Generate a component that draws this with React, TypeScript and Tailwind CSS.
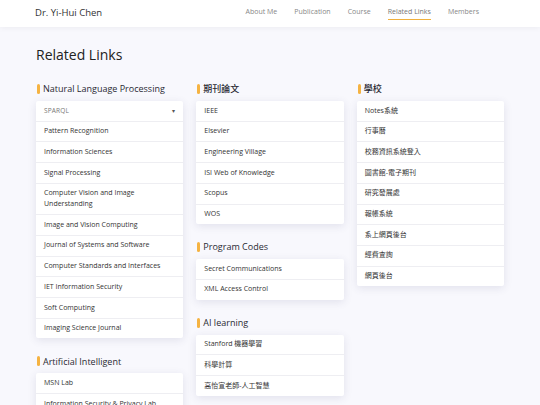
const nav = ['About Me', 'Publication', 'Course', 'Related Links', 'Members'];

type Section = { title: string; items: string[]; select?: string };

const col1: Section[] = [
  {
    title: 'Natural Language Processing',
    select: 'SPARQL',
    items: [
      'Pattern Recognition',
      'Information Sciences',
      'Signal Processing',
      'Computer Vision and Image Understanding',
      'Image and Vision Computing',
      'Journal of Systems and Software',
      'Computer Standards and Interfaces',
      'IET Information Security',
      'Soft Computing',
      'Imaging Science Journal',
    ],
  },
  { title: 'Artificial Intelligent', items: ['MSN Lab', 'Information Security & Privacy Lab'] },
];

const col2: Section[] = [
  { title: '期刊論文', items: ['IEEE', 'Elsevier', 'Engineering Village', 'ISI Web of Knowledge', 'Scopus', 'WOS'] },
  { title: 'Program Codes', items: ['Secret Communications', 'XML Access Control'] },
  { title: 'AI learning', items: ['Stanford 機器學習', '科學計算', '高怡宣老師-人工智慧'] },
];

const col3: Section[] = [
  {
    title: '學校',
    items: ['Notes系統', '行事曆', '校務資訊系統登入', '圖書館-電子期刊', '研究發展處', '報帳系統', '系上網頁後台', '經費查詢', '網頁後台'],
  },
];

function Block({ s }: { s: Section }) {
  return (
    <div className="mb-[17px]">
      <div className="flex items-center gap-[3px] h-[12px] mb-[6px] pl-[1px]">
        <span className="w-[3px] h-[10px] rounded-full bg-[#f5b342]" />
        <span className="text-[9px] font-medium text-[#2a2a33]">{s.title}</span>
      </div>
      <div className="bg-white rounded-[2px] shadow-[0_2px_8px_rgba(60,60,110,0.12)] divide-y divide-[#eeeef2]">
        {s.select && (
          <div className="flex items-center justify-between px-[8px] py-[4.5px] leading-[10.7px] text-[6.5px] tracking-wide text-[#777]">
            <span>{s.select}</span>
            <span className="text-[6px] text-[#555]">▾</span>
          </div>
        )}
        {s.items.map((t) => (
          <div key={t} className="px-[8px] py-[4.5px] leading-[10.7px] text-[7px] text-[#333]">
            {t}
          </div>
        ))}
      </div>
    </div>
  );
}

export default function App() {
  return (
    <div
      className="h-screen bg-[#f8f8fd] overflow-hidden"
      style={{ fontFamily: '"Open Sans", "Noto Sans CJK TC", sans-serif' }}
    >
      <header className="h-[27px] bg-white shadow-[0_1px_6px_rgba(0,0,0,0.05)] flex items-center justify-between pl-[35px] pr-[61px]">
        <span className="text-[9.5px] text-[#333]">Dr. Yi-Hui Chen</span>
        <nav className="flex gap-[17px] text-[7px] text-[#888]">
          {nav.map((n) => (
            <span
              key={n}
              className={n === 'Related Links' ? 'border-b border-[#f0b03c] pb-[1px] text-[#777]' : 'pb-[1px]'}
            >
              {n}
            </span>
          ))}
        </nav>
      </header>
      <main className="px-[36px] pt-[17px]">
        <h1 className="text-[14px] font-medium text-[#222] mb-[18px]">Related Links</h1>
        <div className="grid grid-cols-3 gap-[13px]">
          {[col1, col2, col3].map((c, i) => (
            <div key={i}>
              {c.map((s) => (
                <Block key={s.title} s={s} />
              ))}
            </div>
          ))}
        </div>
      </main>
    </div>
  );
}
